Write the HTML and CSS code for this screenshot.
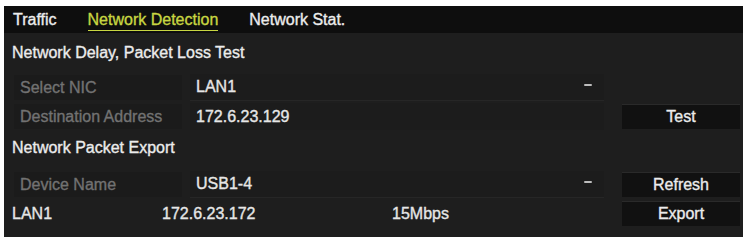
FILE: index.html
```html
<!DOCTYPE html>
<html>
<head>
<meta charset="utf-8">
<link rel="stylesheet" href="styles.css">
</head>
<body>
<div class="panel">
  <div class="tabs">
    <span class="tab">Traffic</span>
    <span class="tab active">Network Detection</span>
    <span class="tab">Network Stat.</span>
  </div>
  <div class="title t1">Network Delay, Packet Loss Test</div>
  <div class="row">
    <div class="label">Select NIC</div>
    <div class="field"><span>LAN1</span><span class="arrow"></span></div>
    <div class="btncell"></div>
  </div>
  <div class="row">
    <div class="label">Destination Address</div>
    <div class="field plain"><span>172.6.23.129</span></div>
    <div class="btncell"><div class="btn">Test</div></div>
  </div>
  <div class="title t2">Network Packet Export</div>
  <div class="row r3">
    <div class="label">Device Name</div>
    <div class="field"><span>USB1-4</span><span class="arrow"></span></div>
    <div class="btncell"><div class="btn">Refresh</div></div>
  </div>
  <div class="row info">
    <span class="c1">LAN1</span>
    <span class="c2">172.6.23.172</span>
    <span class="c3">15Mbps</span>
    <div class="btncell"><div class="btn">Export</div></div>
  </div>
</div>
</body>
</html>
```
FILE: styles.css
```css
html, body {
  margin: 0;
  padding: 0;
  background: #ffffff;
}
body {
  padding: 6px 0 0 4px;
  font-family: "Liberation Sans", Arial, sans-serif;
  font-size: 16px;
  color: #e6e6e6;
}
.panel {
  width: 739px;
  height: 231px;
  background: #1e1e1e;
  display: flex;
  flex-direction: column;
  -webkit-text-stroke: 0.35px currentColor;
}
.tabs {
  height: 27px;
  background: #0e0e0e;
  display: flex;
  align-items: center;
  padding-left: 9px;
  gap: 31px;
  box-sizing: border-box;
}
.tab {
  color: #ececec;
  line-height: 20px;
}
.tab.active {
  color: #c8d642;
  border-bottom: 1px solid #c8d642;
  margin-top: 2px;
}
.title {
  display: flex;
  align-items: center;
  padding-left: 8px;
  color: #ececec;
}
.t1 { height: 40px; }
.t2 { height: 33px; }
.row {
  height: 29px;
  display: flex;
  align-items: center;
}
.r3 { margin-top: 6px; }
.label {
  width: 168px;
  height: 25px;
  margin-left: 10px;
  padding-left: 6px;
  box-sizing: border-box;
  display: flex;
  align-items: center;
  color: #727272;
  background: #1b1b1b;
}
.field {
  width: 414px;
  height: 27px;
  margin-left: 8px;
  padding-left: 6px;
  box-sizing: border-box;
  display: flex;
  align-items: center;
  justify-content: space-between;
  padding-right: 12px;
  background: #1c1c1c;
  border-bottom: 1px solid #262626;
}
.field.plain {
  border-bottom: none;
}
.arrow {
  width: 8px;
  height: 2px;
  background: #bdbdbd;
  border-radius: 1px;
  margin-top: -4px;
}
.btncell {
  width: 118px;
  margin-left: 18px;
}
.btn {
  height: 24px;
  display: flex;
  align-items: center;
  justify-content: center;
  background: #111111;
  border-top: 1px solid #2a2a2a;
  color: #ececec;
}
.info .c1 { margin-left: 8px; width: 150px; }
.info .c2 { width: 230px; }
.info .c3 { width: 212px; }
.info .btncell { margin-left: 18px; }
```
